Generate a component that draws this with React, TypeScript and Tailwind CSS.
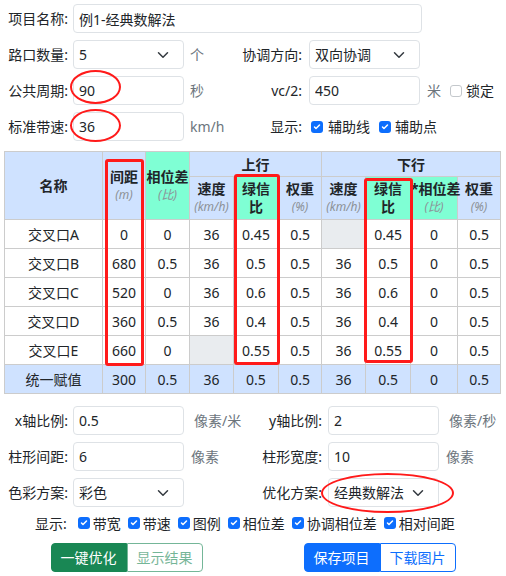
import React from "react";

const Label = ({ children, w }: { children: React.ReactNode; w: string }) => (
  <div className={`${w} shrink-0 whitespace-nowrap text-right`}>{children}</div>
);

const Field = ({ value, w = "w-[111px]", cls = "" }: { value: string; w?: string; cls?: string }) => (
  <input
    readOnly
    defaultValue={value}
    className={`${w} ${cls} h-[29px] rounded-[4px] border border-[#dee2e6] bg-white px-[5px] text-[14px] text-[#212529] outline-none`}
  />
);

const Select = ({ value, cls = "" }: { value: string; cls?: string }) => (
  <div
    className={`${cls} flex h-[29px] w-[111px] items-center justify-between rounded-[4px] border border-[#dee2e6] bg-white pl-[5px] pr-[12px]`}
  >
    <span>{value}</span>
    <svg width="16" height="12" viewBox="0 0 16 16">
      <path d="M2 5l6 6 6-6" fill="none" stroke="#343a40" strokeWidth="2" strokeLinecap="round" strokeLinejoin="round" />
    </svg>
  </div>
);

const Check = ({ on = true, cls = "" }: { on?: boolean; cls?: string }) =>
  on ? (
    <span className={`${cls} flex h-[12px] w-[12px] shrink-0 items-center justify-center rounded-[3px] bg-[#0d6efd]`}>
      <svg width="10" height="10" viewBox="0 0 20 20">
        <path d="M5 10l3 3 7-7" fill="none" stroke="#fff" strokeWidth="3" strokeLinecap="round" strokeLinejoin="round" />
      </svg>
    </span>
  ) : (
    <span className={`${cls} h-[12px] w-[12px] shrink-0 rounded-[3px] border border-[#c4c8cc] bg-white`} />
  );

const Head = ({ t, sub, bg = "bg-[#cfe2ff]", rs }: { t: React.ReactNode; sub?: string; bg?: string; rs?: number }) => (
  <th rowSpan={rs} className={`${bg} border border-[#cccccc] p-0 text-center align-middle font-bold leading-[18px] whitespace-nowrap`}>
    <div>{t}</div>
    {sub && <div className="text-[12px] font-normal italic text-[#8c9196]">{sub}</div>}
  </th>
);

const rows: (string | null)[][] = [
  ["交叉口A", "0", "0", "36", "0.45", "0.5", null, "0.45", "0", "0.5"],
  ["交叉口B", "680", "0.5", "36", "0.5", "0.5", "36", "0.5", "0", "0.5"],
  ["交叉口C", "520", "0", "36", "0.6", "0.5", "36", "0.6", "0", "0.5"],
  ["交叉口D", "360", "0.5", "36", "0.4", "0.5", "36", "0.4", "0", "0.5"],
  ["交叉口E", "660", "0", null, "0.55", "0.5", "36", "0.55", "0", "0.5"],
];
const total = ["统一赋值", "300", "0.5", "36", "0.5", "0.5", "36", "0.5", "0", "0.5"];
const widths = [98, 43, 44, 44, 45, 43, 44, 45, 47, 43];

const show = ["带宽", "带速", "图例", "相位差", "协调相位差", "相对间距"];

export default function App() {
  return (
    <div className="relative h-[576px] w-[506px] overflow-hidden bg-white font-['Noto_Sans','Noto_Sans_CJK_SC',sans-serif] text-[14px] text-[#212529]">
      <div className="flex flex-col gap-[7px] pt-[4px]">
        <div className="flex h-[29px] items-center">
          <Label w="w-[68px]">项目名称:</Label>
          <Field value="例1-经典数解法" w="w-[349px]" cls="ml-[5px]" />
        </div>
        <div className="flex h-[29px] items-center">
          <Label w="w-[68px]">路口数量:</Label>
          <Select value="5" cls="ml-[5px]" />
          <div className="w-[56px] pl-[6px] text-[#6c757d]">个</div>
          <Label w="w-[62px]">协调方向:</Label>
          <Select value="双向协调" cls="ml-[7px]" />
        </div>
        <div className="flex h-[29px] items-center">
          <Label w="w-[68px]">公共周期:</Label>
          <Field value="90" cls="ml-[5px]" />
          <div className="w-[56px] pl-[6px] text-[#6c757d]">秒</div>
          <Label w="w-[62px]">vc/2:</Label>
          <Field value="450" cls="ml-[7px]" />
          <span className="pl-[7px] text-[#6c757d]">米</span>
          <Check on={false} cls="ml-[9px]" />
          <span className="ml-[4px]">锁定</span>
        </div>
        <div className="flex h-[29px] items-center">
          <Label w="w-[68px]">标准带速:</Label>
          <Field value="36" cls="ml-[5px]" />
          <div className="w-[56px] pl-[6px] text-[#6c757d]">km/h</div>
          <Label w="w-[62px]">显示:</Label>
          <Check cls="ml-[9px]" />
          <span className="ml-[5px]">辅助线</span>
          <Check cls="ml-[9px]" />
          <span className="ml-[4px]">辅助点</span>
        </div>
      </div>

      <table className="ml-[4px] mt-[10px] w-[496px] table-fixed border-collapse border border-[#cccccc]">
        <colgroup>
          {widths.map((w, i) => (
            <col key={i} style={{ width: w }} />
          ))}
        </colgroup>
        <thead>
          <tr className="h-[25px]">
            <Head t="名称" rs={2} />
            <Head t="间距" sub="(m)" rs={2} />
            <Head t="相位差" sub="(比)" rs={2} bg="bg-[#7fffd4]" />
            <th colSpan={3} className="border border-[#cccccc] bg-[#cfe2ff] p-0 text-center font-bold">上行</th>
            <th colSpan={4} className="border border-[#cccccc] bg-[#cfe2ff] p-0 text-center font-bold">下行</th>
          </tr>
          <tr className="h-[43px]">
            <Head t="速度" sub="(km/h)" />
            <Head t={<>绿信<br />比</>} bg="bg-[#7fffd4]" />
            <Head t="权重" sub="(%)" />
            <Head t="速度" sub="(km/h)" />
            <Head t={<>绿信<br />比</>} bg="bg-[#7fffd4]" />
            <Head t="*相位差" sub="(比)" bg="bg-[#7fffd4]" />
            <Head t="权重" sub="(%)" />
          </tr>
        </thead>
        <tbody>
          {rows.map((r, i) => (
            <tr key={i} className="h-[29px]">
              {r.map((c, j) => (
                <td
                  key={j}
                  className={`border border-[#cccccc] p-0 text-center ${c === null ? "bg-[#e9ecef]" : "bg-white"}`}
                >
                  {c}
                </td>
              ))}
            </tr>
          ))}
          <tr className="h-[29px]">
            {total.map((c, j) => (
              <td key={j} className="border border-[#cccccc] bg-[#cfe2ff] p-0 text-center">
                {c}
              </td>
            ))}
          </tr>
        </tbody>
      </table>

      <div className="mt-[12px] flex flex-col gap-[7px]">
        <div className="flex h-[29px] items-center">
          <Label w="w-[68px]">x轴比例:</Label>
          <Field value="0.5" cls="ml-[5px]" />
          <div className="w-[78px] pl-[10px] text-[#6c757d]">像素/米</div>
          <Label w="w-[60px]">y轴比例:</Label>
          <Field value="2" cls="ml-[6px]" />
          <span className="pl-[10px] text-[#6c757d]">像素/秒</span>
        </div>
        <div className="flex h-[29px] items-center">
          <Label w="w-[68px]">柱形间距:</Label>
          <Field value="6" cls="ml-[5px]" />
          <div className="w-[78px] pl-[7px] text-[#6c757d]">像素</div>
          <Label w="w-[60px]">柱形宽度:</Label>
          <Field value="10" cls="ml-[6px]" />
          <span className="pl-[7px] text-[#6c757d]">像素</span>
        </div>
        <div className="flex h-[29px] items-center">
          <Label w="w-[68px]">色彩方案:</Label>
          <Select value="彩色" cls="ml-[5px]" />
          <div className="w-[78px]" />
          <Label w="w-[60px]">优化方案:</Label>
          <Select value="经典数解法" cls="ml-[6px]" />
        </div>
      </div>

      <div className="mt-[5px] flex h-[22px] items-center pl-[35px]">
        <span>显示:</span>
        {show.map((s, i) => (
          <div key={s} className={`flex items-center ${i === 0 ? "ml-[11px]" : "ml-[7px]"}`}>
            <Check />
            <span className="ml-[3px]">{s}</span>
          </div>
        ))}
      </div>

      <div className="mt-[9px] grid grid-cols-2">
        <div className="flex justify-center">
          <button className="h-[29px] rounded-l-[4px] border border-[#198754] bg-[#198754] px-[9px] text-white">一键优化</button>
          <button className="h-[29px] rounded-r-[4px] border border-[#198754] bg-white px-[9px] text-[#198754] opacity-60">显示结果</button>
        </div>
        <div className="flex justify-center">
          <button className="h-[29px] rounded-l-[4px] border border-[#0d6efd] bg-[#0d6efd] px-[9px] text-white">保存项目</button>
          <button className="h-[29px] rounded-r-[4px] border border-[#0d6efd] bg-white px-[9px] text-[#0d6efd]">下载图片</button>
        </div>
      </div>

      <div className="pointer-events-none absolute left-[70px] top-[70px] h-[34px] w-[51px] rounded-[50%] border-[2px] border-[#ff1a1a]" />
      <div className="pointer-events-none absolute left-[70px] top-[109px] h-[33px] w-[51px] rounded-[50%] border-[2px] border-[#ff1a1a]" />
      <div className="pointer-events-none absolute left-[105px] top-[159px] h-[207px] w-[39px] rounded-[3px] border-[3px] border-[#ff1a1a]" />
      <div className="pointer-events-none absolute left-[234px] top-[174px] h-[191px] w-[46px] rounded-[3px] border-[3px] border-[#ff1a1a]" />
      <div className="pointer-events-none absolute left-[364px] top-[178px] h-[185px] w-[49px] rounded-[3px] border-[3px] border-[#ff1a1a]" />
      <div className="pointer-events-none absolute left-[321px] top-[473px] h-[40px] w-[133px] rounded-[50%] border-[2px] border-[#ff1a1a]" />
    </div>
  );
}
